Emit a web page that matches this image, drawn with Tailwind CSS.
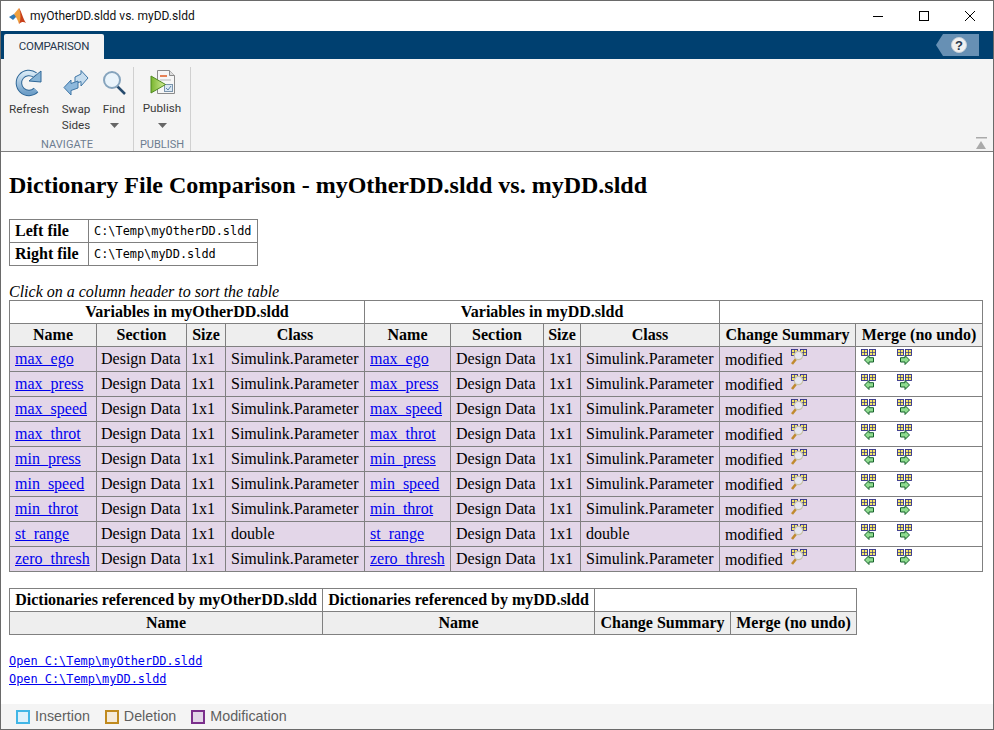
<!DOCTYPE html>
<html><head><meta charset="utf-8"><script src="https://cdn.jsdelivr.net/npm/@tailwindcss/browser@4"></script></head>
<body class="m-0 bg-white overflow-hidden">
<svg width="0" height="0" class="absolute">
<defs>
<linearGradient id="blue" x1="0" y1="0" x2="0" y2="1"><stop offset="0" stop-color="#d6e8f5"/><stop offset="1" stop-color="#6f9fc8"/></linearGradient>
<linearGradient id="green" x1="0" y1="0" x2="1" y2="0"><stop offset="0" stop-color="#79b52e"/><stop offset="1" stop-color="#d4ee9a"/></linearGradient>
<symbol id="grid" viewBox="0 0 7 7"><rect x="0.500" y="0.500" width="6" height="6" fill="#f6e866" stroke="#30308c" stroke-width="0.900"/><path d="M3.500 0.500v6M0.500 3.500h6" stroke="#30308c" stroke-width="0.700"/></symbol>
<symbol id="view" viewBox="0 0 17 16">
<use href="#grid" x="0" y="0" width="7" height="7"/><use href="#grid" x="9" y="0" width="7" height="7"/>
<path d="M1 15 L5 10" stroke="#c08a30" stroke-width="2.600" fill="none"/>
<circle cx="7.500" cy="6.500" r="4.200" fill="#e6e6f0" stroke="#c9c4aa" stroke-width="1.200"/>
</symbol>
<symbol id="ml" viewBox="0 0 15 16">
<use href="#grid" x="0" y="0" width="7" height="7"/><use href="#grid" x="8" y="0" width="7" height="7"/>
<path d="M3.500 11 L8 6.500 V8.700 H12.500 V13 H8 V15.500 Z" fill="#8fdc8f" stroke="#14602a"/>
</symbol>
<symbol id="mr" viewBox="0 0 15 16">
<use href="#grid" x="0" y="0" width="7" height="7"/><use href="#grid" x="8" y="0" width="7" height="7"/>
<path d="M12.500 11 L8 6.500 V8.700 H3.500 V13 H8 V15.500 Z" fill="#8fdc8f" stroke="#14602a"/>
</symbol>
</defs>
</svg>
<div class="w-[994px] h-[730px] flex flex-col border border-[#6a6a6a] font-['Liberation_Serif',serif] text-black bg-white">
  <!-- title bar -->
  <div class="h-[30px] shrink-0 flex items-center font-['Roboto',sans-serif] text-[12px] text-[#111]">
    <svg class="ml-[8px] mr-[4px]" width="17" height="16" viewBox="0 0 17 16"><path d="M0 9 L5 6 L8 8 L4 12Z" fill="#2f78b4"/><path d="M5 6 L10 0 L13 9 L10 16 C9 12 7 9 5 6Z" fill="#f0a040"/><path d="M10 0 C12 2 14 11 17 15 C15 14 13 13 10 16 C12 11 12 6 10 0Z" fill="#c8401a"/></svg>
    <span>myOtherDD.sldd vs. myDD.sldd</span>
    <div class="ml-auto flex items-center">
      <svg width="46" height="30" viewBox="0 0 46 30"><path d="M18 15.500h10" stroke="#000"/></svg>
      <svg width="46" height="30" viewBox="0 0 46 30"><rect x="18.500" y="10.500" width="9" height="9" fill="none" stroke="#000"/></svg>
      <svg width="46" height="30" viewBox="0 0 46 30"><path d="M18 10l10 10M28 10l-10 10" stroke="#000"/></svg>
    </div>
  </div>
  <!-- tab strip -->
  <div class="h-[28px] shrink-0 bg-[#004070] flex items-end relative">
    <div class="ml-[3px] w-[100px] h-[25px] bg-[#f4f4f4] rounded-t-[2px] flex items-center justify-center font-['Roboto',sans-serif] text-[11.500px] text-[#26384e] tracking-[-0.2px]">COMPARISON</div>
    <div class="absolute right-[14px] top-[3px] w-[43px] h-[22px] bg-[#6790b4] [clip-path:polygon(7px_0,100%_0,100%_100%,7px_100%,0_50%)] flex items-center justify-end pr-[12px]">
      <span class="w-[16px] h-[16px] rounded-full bg-[#f0f0f0] border border-[#c8d0d8] flex items-center justify-center text-[13px] font-bold text-[#27364a] font-['Liberation_Sans',sans-serif] leading-none">?</span>
    </div>
  </div>
  <!-- ribbon -->
  <div class="h-[93px] shrink-0 bg-[#f4f4f4] border-b border-[#7e7e7e] flex relative font-['Roboto',sans-serif] text-[11.700px] text-[#3a3a3a]">
    <div class="w-[133px] mt-[8px] border-r border-[#d0d0d0] flex flex-col">
      <div class="flex h-[77px]">
        <div class="w-[56px] flex flex-col items-center">
          <svg width="28" height="28" viewBox="0 0 28 28" class="mt-[2px] shrink-0"><path d="M21 21 A10 10 0 1 1 20 6" fill="none" stroke="#2f6797" stroke-width="6.500"/><path d="M21 21 A10 10 0 1 1 20 6" fill="none" stroke="url(#blue)" stroke-width="4.500"/><path d="M14 12 L26 13 L26 2 Z" fill="#88b4d6" stroke="#2f6797"/></svg>
          <span class="mt-[4px] leading-[16px]">Refresh</span>
        </div>
        <div class="w-[38px] flex flex-col items-center">
          <svg width="26" height="26" viewBox="0 0 26 26" class="mt-[3px] shrink-0"><path d="M25 8 L18 0.500 V4 L12 7 V14 L18 11.500 V16 Z" fill="#c5dcee" stroke="#3f76a6"/><path d="M1 17.500 L8 10 V13.500 L15 11 V18 L8 20.500 V25 Z" fill="#8db8dc" stroke="#3f76a6"/></svg>
          <span class="mt-[5px] leading-[16px] text-center">Swap<br>Sides</span>
        </div>
        <div class="w-[38px] flex flex-col items-center">
          <svg width="26" height="28" viewBox="0 0 26 28" class="mt-[2px] shrink-0"><path d="M16 17 L24 25" stroke="#274b6e" stroke-width="2.500"/><circle cx="11" cy="11" r="8" fill="#eaf4fb" stroke="#86a4bd" stroke-width="2"/></svg>
          <span class="mt-[4px] leading-[16px]">Find</span>
          <svg class="mt-[6px]" width="9" height="5"><path d="M0 0h9L4.500 5z" fill="#666"/></svg>
        </div>
      </div>
      <div class="text-center text-[11px] text-[#6d7d90] leading-[12px] tracking-[0.1px]">NAVIGATE</div>
    </div>
    <div class="w-[57px] mt-[8px] border-r border-[#d0d0d0] flex flex-col">
      <div class="flex h-[77px] flex-col items-center">
        <svg width="26" height="28" viewBox="0 0 26 28" class="mt-[2px] ml-[2px] shrink-0"><path d="M7.500 1.500h12l5 5v18h-17z" fill="#f6f6f6" stroke="#8a8a8a"/><path d="M19.500 1.500v5h5" fill="#ddd" stroke="#8a8a8a"/><path d="M10 7h7" stroke="#e05a20" stroke-width="1.500"/><path d="M10 11h11" stroke="#b8b8b8"/><rect x="14.500" y="15.500" width="8" height="7" fill="#dbe7f2" stroke="#7a94ac"/><path d="M16 19l2 2 3-4" stroke="#5d86ab" fill="none"/><path d="M1 7 L15.500 15.500 L1 24Z" fill="url(#green)" stroke="#4f8a20"/></svg>
        <span class="mt-[3px] leading-[16px]">Publish</span>
        <svg class="mt-[7px]" width="9" height="5"><path d="M0 0h9L4.500 5z" fill="#666"/></svg>
      </div>
      <div class="text-center text-[11px] text-[#6d7d90] leading-[12px]">PUBLISH</div>
    </div>
    <svg class="absolute right-[6px] bottom-[2px]" width="12" height="12" viewBox="0 0 12 12"><path d="M1 0.500h11" stroke="#aaa" stroke-width="2"/><path d="M1 12 L6 4 L11 12Z" fill="#aaa"/></svg>
  </div>
  <!-- content -->
  <div class="flex-1 min-h-0 pl-[8px] pr-[10px] overflow-hidden">
    <h2 class="mt-[20px] text-[24px] leading-[27px] font-bold">Dictionary File Comparison - myOtherDD.sldd vs. myDD.sldd</h2>
    <table class="mt-[20px] border-collapse text-[16px] leading-[18px] [&_td]:border [&_td]:border-[#808080] [&_td]:px-[5px]">
      <tbody>
      <tr class="h-[23px]"><td class="w-[79px] font-bold">Left file</td><td class="w-[169px] font-['DejaVu_Sans_Mono',monospace] text-[11.900px]">C:\Temp\myOtherDD.sldd</td></tr>
      <tr class="h-[23px]"><td class="font-bold">Right file</td><td class="font-['DejaVu_Sans_Mono',monospace] text-[11.900px]">C:\Temp\myDD.sldd</td></tr>
      </tbody>
    </table>
    <p class="mt-[16px] h-[18px] text-[16px] leading-[20px] italic">Click on a column header to sort the table</p>
    <table class="table-fixed border-collapse w-[973px] text-[16px] leading-[18px] [&_th]:border [&_th]:border-[#808080] [&_th]:pb-[1px] [&_th]:whitespace-nowrap [&_td]:border [&_td]:border-[#808080] [&_td]:px-[5px] [&_td]:whitespace-nowrap [&_td]:pb-[1px] [&_td:nth-child(2)]:pl-[4px] [&_td:nth-child(3)]:pl-[4px] [&_a]:text-[#0000ee] [&_a]:underline [&_.m]:bg-[#e3d6e8]">
      <colgroup><col class="w-[87px]"><col class="w-[90px]"><col class="w-[39px]"><col class="w-[139px]"><col class="w-[86px]"><col class="w-[93px]"><col class="w-[37px]"><col class="w-[139px]"><col class="w-[136px]"><col class="w-[127px]"></colgroup>
      <thead>
      <tr class="h-[23px] text-center"><th colspan="4">Variables in myOtherDD.sldd</th><th colspan="4">Variables in myDD.sldd</th><th colspan="2"></th></tr>
      <tr class="h-[23px] bg-[#eeeeee] text-center"><th>Name</th><th>Section</th><th>Size</th><th>Class</th><th>Name</th><th>Section</th><th>Size</th><th>Class</th><th>Change Summary</th><th>Merge (no undo)</th></tr>
      </thead>
      <tbody>
      <tr class="h-[25px]"><td class="m"><a href="#">max_ego</a></td><td class="m">Design Data</td><td class="m">1x1</td><td class="m">Simulink.Parameter</td><td class="m"><a href="#">max_ego</a></td><td class="m">Design Data</td><td class="m">1x1</td><td class="m">Simulink.Parameter</td><td class="m"><span class="flex items-start h-[20px]"><span class="mt-[2px]">modified</span><svg class="ml-[8px]" width="17" height="16"><use href="#view"/></svg></span></td><td><span class="flex items-start h-[20px]"><svg width="15" height="16"><use href="#ml"/></svg><svg class="ml-[21px]" width="15" height="16"><use href="#mr"/></svg></span></td></tr>
      <tr class="h-[25px]"><td class="m"><a href="#">max_press</a></td><td class="m">Design Data</td><td class="m">1x1</td><td class="m">Simulink.Parameter</td><td class="m"><a href="#">max_press</a></td><td class="m">Design Data</td><td class="m">1x1</td><td class="m">Simulink.Parameter</td><td class="m"><span class="flex items-start h-[20px]"><span class="mt-[2px]">modified</span><svg class="ml-[8px]" width="17" height="16"><use href="#view"/></svg></span></td><td><span class="flex items-start h-[20px]"><svg width="15" height="16"><use href="#ml"/></svg><svg class="ml-[21px]" width="15" height="16"><use href="#mr"/></svg></span></td></tr>
      <tr class="h-[25px]"><td class="m"><a href="#">max_speed</a></td><td class="m">Design Data</td><td class="m">1x1</td><td class="m">Simulink.Parameter</td><td class="m"><a href="#">max_speed</a></td><td class="m">Design Data</td><td class="m">1x1</td><td class="m">Simulink.Parameter</td><td class="m"><span class="flex items-start h-[20px]"><span class="mt-[2px]">modified</span><svg class="ml-[8px]" width="17" height="16"><use href="#view"/></svg></span></td><td><span class="flex items-start h-[20px]"><svg width="15" height="16"><use href="#ml"/></svg><svg class="ml-[21px]" width="15" height="16"><use href="#mr"/></svg></span></td></tr>
      <tr class="h-[25px]"><td class="m"><a href="#">max_throt</a></td><td class="m">Design Data</td><td class="m">1x1</td><td class="m">Simulink.Parameter</td><td class="m"><a href="#">max_throt</a></td><td class="m">Design Data</td><td class="m">1x1</td><td class="m">Simulink.Parameter</td><td class="m"><span class="flex items-start h-[20px]"><span class="mt-[2px]">modified</span><svg class="ml-[8px]" width="17" height="16"><use href="#view"/></svg></span></td><td><span class="flex items-start h-[20px]"><svg width="15" height="16"><use href="#ml"/></svg><svg class="ml-[21px]" width="15" height="16"><use href="#mr"/></svg></span></td></tr>
      <tr class="h-[25px]"><td class="m"><a href="#">min_press</a></td><td class="m">Design Data</td><td class="m">1x1</td><td class="m">Simulink.Parameter</td><td class="m"><a href="#">min_press</a></td><td class="m">Design Data</td><td class="m">1x1</td><td class="m">Simulink.Parameter</td><td class="m"><span class="flex items-start h-[20px]"><span class="mt-[2px]">modified</span><svg class="ml-[8px]" width="17" height="16"><use href="#view"/></svg></span></td><td><span class="flex items-start h-[20px]"><svg width="15" height="16"><use href="#ml"/></svg><svg class="ml-[21px]" width="15" height="16"><use href="#mr"/></svg></span></td></tr>
      <tr class="h-[25px]"><td class="m"><a href="#">min_speed</a></td><td class="m">Design Data</td><td class="m">1x1</td><td class="m">Simulink.Parameter</td><td class="m"><a href="#">min_speed</a></td><td class="m">Design Data</td><td class="m">1x1</td><td class="m">Simulink.Parameter</td><td class="m"><span class="flex items-start h-[20px]"><span class="mt-[2px]">modified</span><svg class="ml-[8px]" width="17" height="16"><use href="#view"/></svg></span></td><td><span class="flex items-start h-[20px]"><svg width="15" height="16"><use href="#ml"/></svg><svg class="ml-[21px]" width="15" height="16"><use href="#mr"/></svg></span></td></tr>
      <tr class="h-[25px]"><td class="m"><a href="#">min_throt</a></td><td class="m">Design Data</td><td class="m">1x1</td><td class="m">Simulink.Parameter</td><td class="m"><a href="#">min_throt</a></td><td class="m">Design Data</td><td class="m">1x1</td><td class="m">Simulink.Parameter</td><td class="m"><span class="flex items-start h-[20px]"><span class="mt-[2px]">modified</span><svg class="ml-[8px]" width="17" height="16"><use href="#view"/></svg></span></td><td><span class="flex items-start h-[20px]"><svg width="15" height="16"><use href="#ml"/></svg><svg class="ml-[21px]" width="15" height="16"><use href="#mr"/></svg></span></td></tr>
      <tr class="h-[25px]"><td class="m"><a href="#">st_range</a></td><td class="m">Design Data</td><td class="m">1x1</td><td class="m">double</td><td class="m"><a href="#">st_range</a></td><td class="m">Design Data</td><td class="m">1x1</td><td class="m">double</td><td class="m"><span class="flex items-start h-[20px]"><span class="mt-[2px]">modified</span><svg class="ml-[8px]" width="17" height="16"><use href="#view"/></svg></span></td><td><span class="flex items-start h-[20px]"><svg width="15" height="16"><use href="#ml"/></svg><svg class="ml-[21px]" width="15" height="16"><use href="#mr"/></svg></span></td></tr>
      <tr class="h-[25px]"><td class="m"><a href="#">zero_thresh</a></td><td class="m">Design Data</td><td class="m">1x1</td><td class="m">Simulink.Parameter</td><td class="m"><a href="#">zero_thresh</a></td><td class="m">Design Data</td><td class="m">1x1</td><td class="m">Simulink.Parameter</td><td class="m"><span class="flex items-start h-[20px]"><span class="mt-[2px]">modified</span><svg class="ml-[8px]" width="17" height="16"><use href="#view"/></svg></span></td><td><span class="flex items-start h-[20px]"><svg width="15" height="16"><use href="#ml"/></svg><svg class="ml-[21px]" width="15" height="16"><use href="#mr"/></svg></span></td></tr>
      </tbody>
    </table>
    <table class="mt-[16px] table-fixed border-collapse w-[847px] text-[16px] leading-[18px] [&_th]:border [&_th]:border-[#808080] [&_th]:pb-[1px] [&_th]:whitespace-nowrap">
      <colgroup><col class="w-[313px]"><col class="w-[272px]"><col class="w-[136px]"><col class="w-[126px]"></colgroup>
      <thead>
      <tr class="h-[23px]"><th>Dictionaries referenced by myOtherDD.sldd</th><th>Dictionaries referenced by myDD.sldd</th><th colspan="2"></th></tr>
      <tr class="h-[23px] bg-[#eeeeee]"><th>Name</th><th>Name</th><th>Change Summary</th><th>Merge (no undo)</th></tr>
      </thead>
    </table>
    <div class="mt-[17px] font-['DejaVu_Sans_Mono',monospace] text-[11.900px] leading-[18px]">
      <a href="#" class="block text-[#0000ee] underline">Open C:\Temp\myOtherDD.sldd</a>
      <a href="#" class="block text-[#0000ee] underline">Open C:\Temp\myDD.sldd</a>
    </div>
  </div>
  <!-- legend -->
  <div class="h-[25px] shrink-0 bg-[#f4f4f4] flex items-center pl-[15px] font-['Liberation_Sans',sans-serif] text-[14.300px] text-[#5f5f5f]">
    <span class="w-[14px] h-[14px] border-2 border-[#41b6e6] bg-[#def1fb]"></span><span class="ml-[5px] mr-[15px]">Insertion</span>
    <span class="w-[14px] h-[14px] border-2 border-[#c08a1e] bg-[#f5ead8]"></span><span class="ml-[5px] mr-[15px]">Deletion</span>
    <span class="w-[14px] h-[14px] border-2 border-[#7b2f8c] bg-[#e3d6e8]"></span><span class="ml-[5px]">Modification</span>
  </div>
</div>
</body></html>
